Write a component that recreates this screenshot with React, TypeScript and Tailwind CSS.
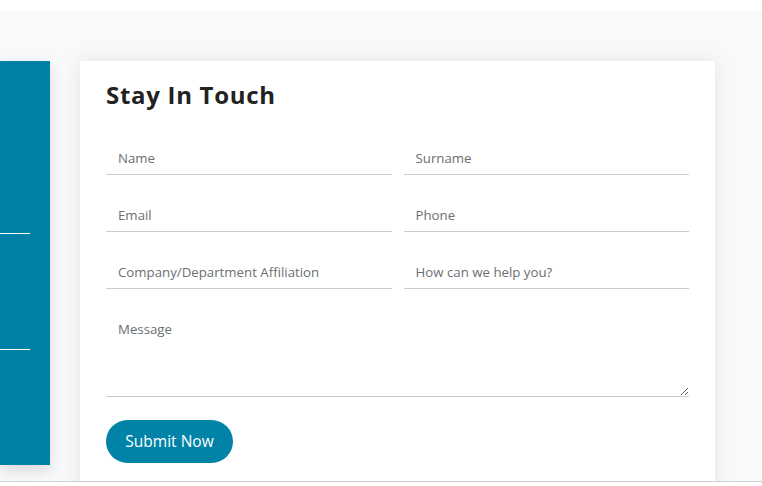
import React from 'react'

const inputCls =
  'h-8 w-full border-0 border-b border-[#cccccc] bg-transparent px-3 pb-[2px] text-[13.25px] text-[#333] placeholder:text-[#6b6f73] outline-none'

export default function App() {
  return (
    <div className="h-[486px] w-[762px] bg-white" style={{ fontFamily: '"Open Sans", "Liberation Sans", sans-serif' }}>
      <div className="h-[11px]" />
      <section className="relative h-[471px] overflow-hidden border-b border-[#cfcfcf] bg-[#f8f9fb]">
        <div className="flex pt-[50px]">
          {/* left teal panel */}
          <div className="h-[404px] w-[50px] shrink-0 bg-[#0080a6] shadow-[0_6px_14px_rgba(0,0,0,0.12)]">
            <div className="mt-[172px] h-px w-[30px] bg-white" />
            <div className="mt-[115px] h-px w-[30px] bg-white" />
          </div>

          {/* form card */}
          <div className="ml-[30px] w-[635px] bg-white px-[26px] pt-[20px] pb-10 shadow-[0_0_18px_rgba(0,0,0,0.09)]">
            <h2 className="text-[24px] font-bold leading-[28px] tracking-[0.7px] text-[#222]">
              Stay In Touch
            </h2>

            <form className="mt-[34px]" onSubmit={(e) => e.preventDefault()}>
              <div className="grid grid-cols-2 gap-x-3 gap-y-[25px]">
                <input className={inputCls} placeholder="Name" />
                <input className={inputCls} placeholder="Surname" />
                <input className={inputCls} placeholder="Email" />
                <input className={inputCls} placeholder="Phone" />
                <input className={inputCls} placeholder="Company/Department Affiliation" />
                <input className={inputCls} placeholder="How can we help you?" />
              </div>
              <textarea
                className="mt-[25px] block h-[83px] w-full border-0 border-b border-[#cccccc] bg-transparent px-3 pt-[6px] text-[13.25px] text-[#333] placeholder:text-[#6b6f73] outline-none"
                placeholder="Message"
              />
              <button
                type="submit"
                className="mt-[23px] h-[43px] w-[127px] rounded-full bg-[#0083a7] pt-[1px] text-[15.5px] text-white"
              >
                Submit Now
              </button>
            </form>
          </div>
        </div>
      </section>
    </div>
  )
}
